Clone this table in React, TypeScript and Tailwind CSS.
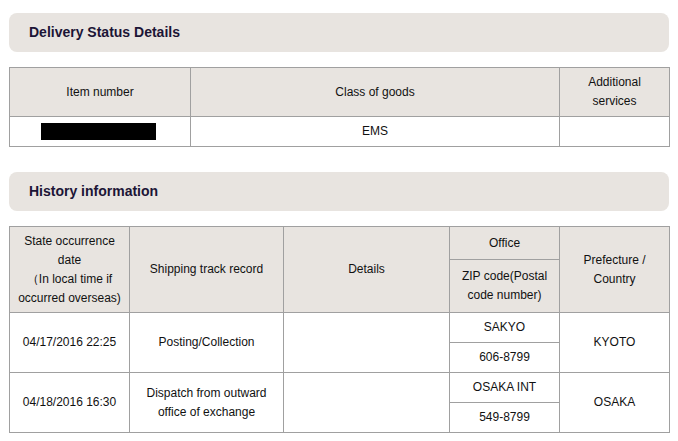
const th = "border border-[#a0a0a0] bg-[#e8e4e0] text-center font-normal align-middle px-1";
const td = "border border-[#a0a0a0] bg-white text-center align-middle px-1";

function SectionTitle({ children }: { children: React.ReactNode }) {
  return (
    <div className="flex h-[39px] items-center rounded-lg bg-[#e8e4e0] pl-5 text-[14px] font-bold text-[#1c1536]">
      {children}
    </div>
  );
}

export default function App() {
  return (
    <div
      className="w-[678px] bg-white pl-[9px] pr-[9px] pt-[13px] text-[12px] leading-[19px] text-[#111]"
      style={{ fontFamily: '"Liberation Sans", Arial, sans-serif' }}
    >
      <SectionTitle>Delivery Status Details</SectionTitle>

      <table className="mt-[15px] w-[660px] table-fixed border-collapse">
        <colgroup>
          <col className="w-[181px]" />
          <col className="w-[369px]" />
          <col className="w-[110px]" />
        </colgroup>
        <tbody>
          <tr className="h-[49px]">
            <th className={th}>Item number</th>
            <th className={th}>Class of goods</th>
            <th className={th}>
              Additional
              <br />
              services
            </th>
          </tr>
          <tr className="h-[30px]">
            <td className={td}>
              <div className="ml-[27px] h-[17px] w-[115px] bg-black" />
            </td>
            <td className={td}>EMS</td>
            <td className={td}></td>
          </tr>
        </tbody>
      </table>

      <div className="mt-[25px]">
        <SectionTitle>History information</SectionTitle>
      </div>

      <table className="mt-[15px] w-[660px] table-fixed border-collapse">
        <colgroup>
          <col className="w-[120px]" />
          <col className="w-[154px]" />
          <col className="w-[166px]" />
          <col className="w-[110px]" />
          <col className="w-[110px]" />
        </colgroup>
        <tbody>
          <tr className="h-[33px]">
            <th className={th} rowSpan={2}>
              State occurrence
              <br />
              date
              <br />
              （In local time if
              <br />
              occurred overseas)
            </th>
            <th className={th} rowSpan={2}>
              Shipping track record
            </th>
            <th className={th} rowSpan={2}>
              Details
            </th>
            <th className={th}>Office</th>
            <th className={th} rowSpan={2}>
              Prefecture /
              <br />
              Country
            </th>
          </tr>
          <tr className="h-[53px]">
            <th className={th}>
              ZIP code(Postal
              <br />
              code number)
            </th>
          </tr>

          <tr className="h-[30px]">
            <td className={td} rowSpan={2}>
              04/17/2016 22:25
            </td>
            <td className={td} rowSpan={2}>
              Posting/Collection
            </td>
            <td className={td} rowSpan={2}></td>
            <td className={td}>SAKYO</td>
            <td className={td} rowSpan={2}>
              KYOTO
            </td>
          </tr>
          <tr className="h-[30px]">
            <td className={td}>606-8799</td>
          </tr>

          <tr className="h-[30px]">
            <td className={td} rowSpan={2}>
              04/18/2016 16:30
            </td>
            <td className={td} rowSpan={2}>
              Dispatch from outward
              <br />
              office of exchange
            </td>
            <td className={td} rowSpan={2}></td>
            <td className={td}>OSAKA INT</td>
            <td className={td} rowSpan={2}>
              OSAKA
            </td>
          </tr>
          <tr className="h-[30px]">
            <td className={td}>549-8799</td>
          </tr>
        </tbody>
      </table>
    </div>
  );
}
